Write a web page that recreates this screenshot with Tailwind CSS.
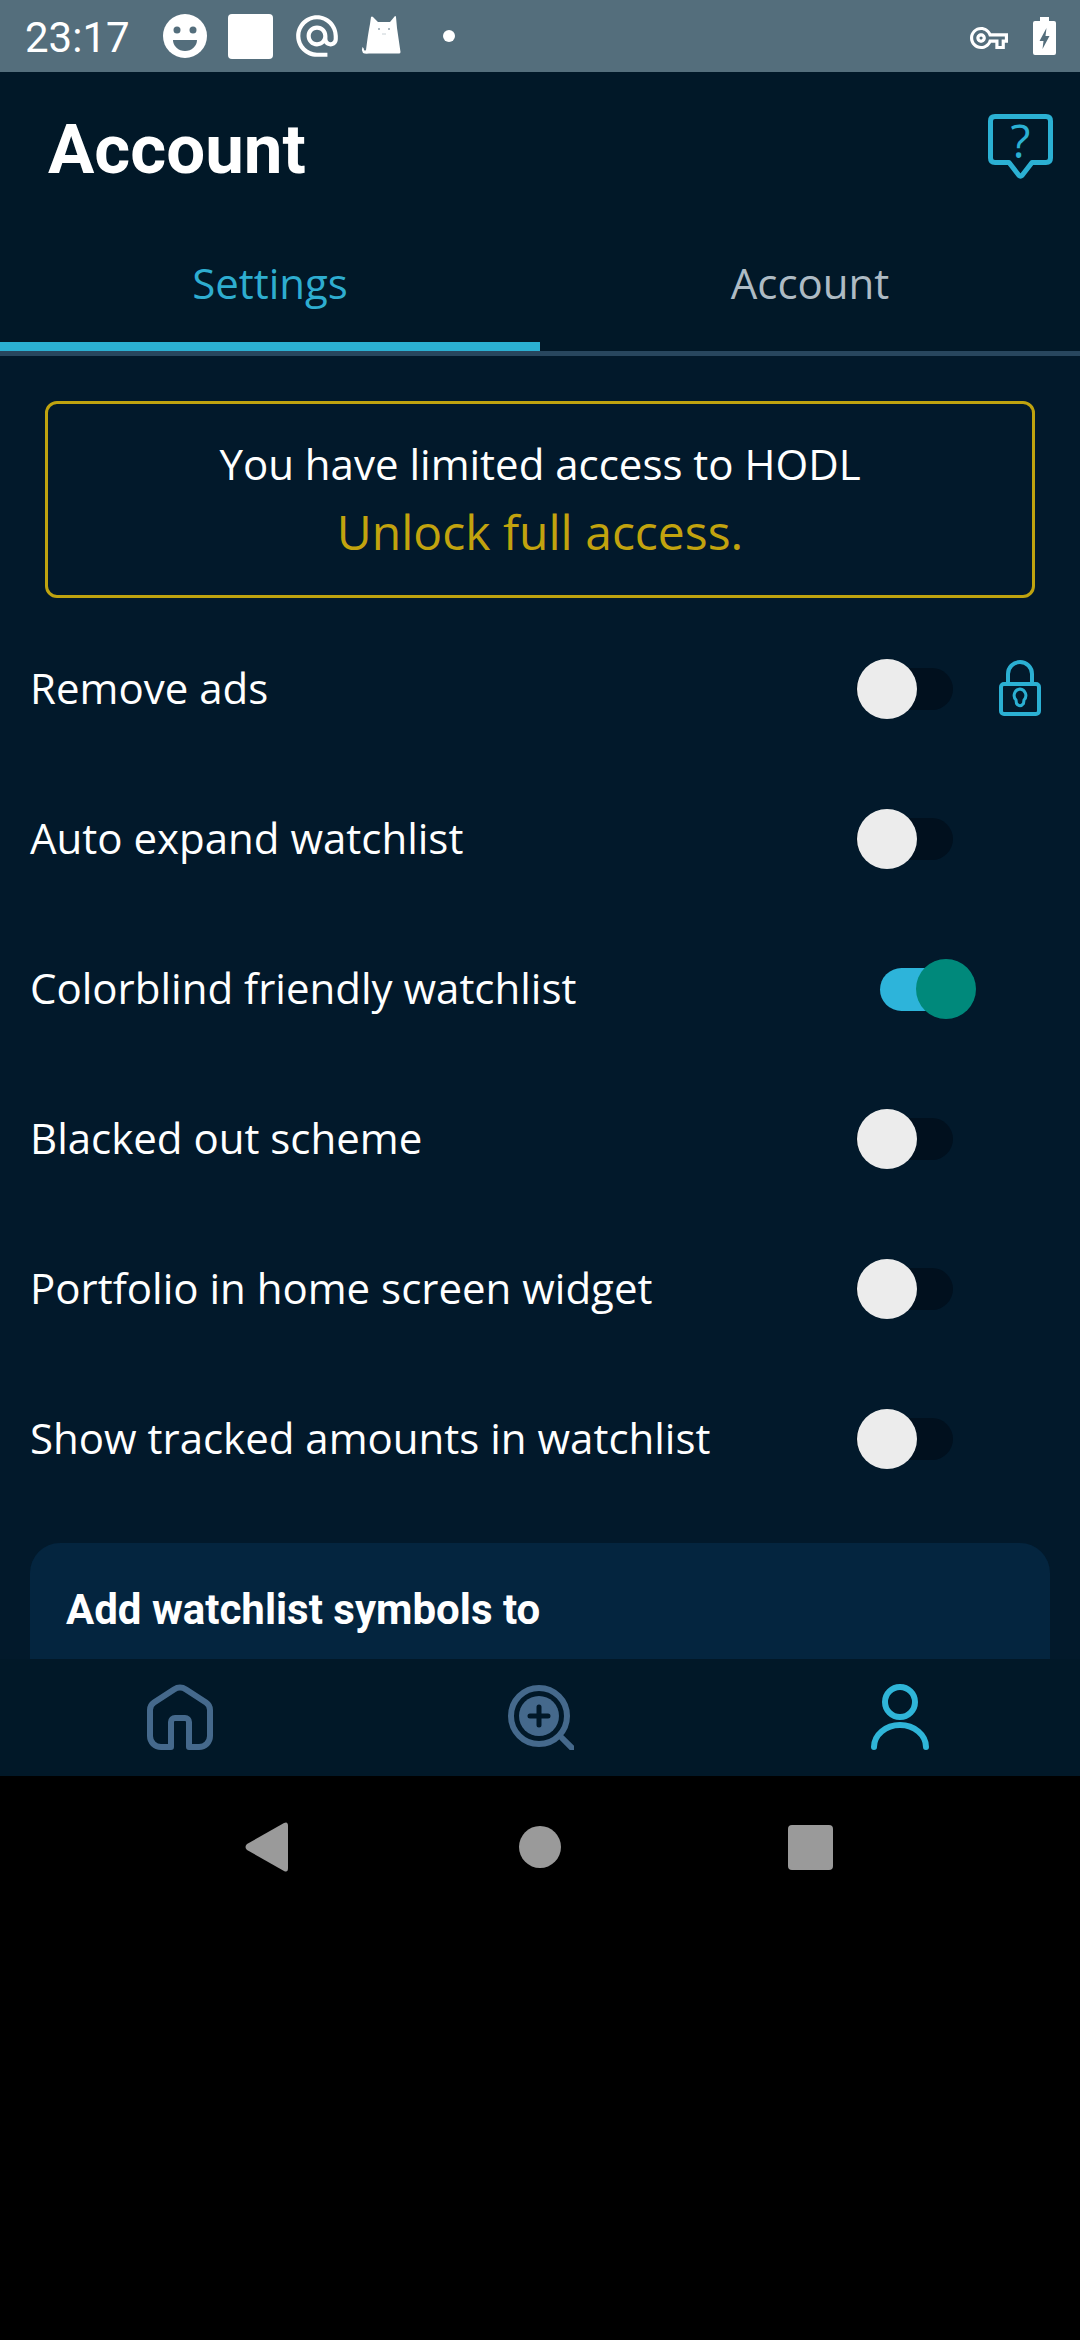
<!DOCTYPE html>
<html lang="en">

<head>
    <meta charset="UTF-8">
    <meta name="viewport" content="width=device-width, initial-scale=1.0">
    <script src="https://cdn.jsdelivr.net/npm/@tailwindcss/browser@4"></script>
    <title>Account</title>
</head>

<body class="bg-black">
    <div class="w-[1080px] h-[2340px] flex flex-col bg-black font-['Open_Sans',sans-serif] text-white overflow-hidden">

        <!-- status bar -->
        <div class="h-[72px] shrink-0 bg-[#546e7c] flex items-center relative">
            <span class="ml-[25px] mt-[4px] w-[104px] font-['Roboto',sans-serif] text-[42px] leading-none">23:17</span>
            <!-- smiley -->
            <svg class="ml-[34px]" width="44" height="44" viewBox="0 0 44 44">
                <circle cx="22" cy="22" r="22" fill="#fff" />
                <circle cx="14" cy="16" r="3.5" fill="#546e7c" />
                <circle cx="30" cy="16" r="3.5" fill="#546e7c" />
                <path d="M10 26 H34 A12 11 0 0 1 10 26 Z" fill="#546e7c" />
            </svg>
            <div class="ml-[21px] w-[45px] h-[45px] rounded-[4px] bg-white"></div>
            <!-- at sign -->
            <svg class="ml-[19px]" width="50" height="50" viewBox="0 0 24 24" fill="#fff">
                <path d="M12 2C6.48 2 2 6.48 2 12s4.48 10 10 10h5v-2h-5c-4.34 0-8-3.66-8-8s3.66-8 8-8 8 3.66 8 8v1.43c0 .79-.71 1.57-1.5 1.57s-1.5-.78-1.5-1.57V12c0-2.76-2.24-5-5-5s-5 2.24-5 5 2.24 5 5 5c1.38 0 2.64-.56 3.54-1.47.65.89 1.77 1.47 2.96 1.47 1.97 0 3.5-1.6 3.5-3.57V12c0-5.52-4.48-10-10-10zm0 13c-1.66 0-3-1.34-3-3s1.34-3 3-3 3 1.34 3 3-1.34 3-3 3z" />
            </svg>
            <!-- cat -->
            <svg class="ml-[18px]" width="44" height="44" viewBox="0 0 44 44" fill="#fff">
                <path d="M11 3 Q12 2 13 3 L18 8 H30 L35 2 Q36 2 36 3 L37 14 L40.500 38 Q40.500 39.500 39 39.500 H9 Q5 40 3 39 Q1 36 2.500 33 Q4 34 4 36 Q5 37 6 36 Q8 20 10 10 Z" />
                <circle cx="19" cy="15" r="1" fill="#8fa1ab" />
                <circle cx="29" cy="15" r="1" fill="#8fa1ab" />
                <path d="M22 20 H26" stroke="#c8d1d6" stroke-width="1" />
            </svg>
            <div class="ml-[39px] w-[12px] h-[12px] rounded-full bg-white"></div>

            <div class="ml-auto flex items-center">
                <!-- vpn key -->
                <svg class="mt-[4px]" width="38" height="38" viewBox="0 0 24 24" fill="#fff">
                    <path d="M22 19h-6v-4h-2.680c-1.140 2.420-3.600 4-6.320 4-3.860 0-7-3.140-7-7s3.140-7 7-7c2.720 0 5.170 1.580 6.320 4H24v6h-2v4zm-4-2h2v-4h2v-2H11.940l-.23-.67C11.010 8.340 9.110 7 7 7c-2.760 0-5 2.240-5 5s2.240 5 5 5c2.110 0 4.010-1.340 4.710-3.330l.23-.67H18v4zM7 15c-1.650 0-3-1.350-3-3s1.350-3 3-3 3 1.350 3 3-1.350 3-3 3zm0-4c-.55 0-1 .45-1 1s.45 1 1 1 1-.45 1-1-.45-1-1-1z" />
                </svg>
                <!-- battery -->
                <svg class="ml-[25px] mr-[24px]" width="23" height="38" viewBox="0 0 23 38">
                    <path d="M7 0 H16 V4 H21 Q23 4 23 6 V36 Q23 38 21 38 H2 Q0 38 0 36 V6 Q0 4 2 4 H7 Z" fill="#fff" />
                    <path d="M13.500 11 L6.500 24 H10.500 L9.500 32 L16.500 19 H12.500 Z" fill="#546e7c" />
                </svg>
            </div>
        </div>

        <!-- header -->
        <div class="h-[150px] shrink-0 bg-[#011828] flex items-center justify-between pl-[48px] pr-[27px]">
            <h1 class="font-['Roboto',sans-serif] font-bold text-[69px] leading-none mt-[5px]">Account</h1>
            <div class="relative w-[65px] h-[66px]">
                <svg class="block" width="65" height="66" viewBox="0 0 65 66">
                    <path d="M7 2.500 H58 Q62.500 2.500 62.500 7 V44 Q62.500 48.500 58 48.500 H44 L34 61.500 Q32.500 63 31 61.500 L21 48.500 H7 Q2.500 48.500 2.500 44 V7 Q2.500 2.500 7 2.500 Z" fill="none" stroke="#2bb0d3" stroke-width="5" stroke-linejoin="round" />
                </svg>
                <span class="absolute inset-x-0 top-0 text-center text-[46px] leading-[52px] font-medium text-[#2bb0d3]">?</span>
            </div>
        </div>

        <!-- tabs -->
        <div class="h-[134px] shrink-0 bg-[#011828] flex">
            <div class="w-1/2 flex flex-col">
                <div class="flex-1 flex items-center justify-center text-[42px] text-[#2eadd0] leading-none pt-[2px]">Settings</div>
                <div class="h-[9px] bg-[#2bb0d3]"></div>
                <div class="h-[5px] bg-[#28465e]"></div>
            </div>
            <div class="w-1/2 flex flex-col">
                <div class="flex-1 flex items-center justify-center text-[42px] text-[#aebbc4] leading-none pt-[2px]">Account</div>
                <div class="h-[9px]"></div>
                <div class="h-[5px] bg-[#28465e]"></div>
            </div>
        </div>

        <!-- settings list -->
        <div class="h-[1303px] shrink-0 bg-[#02192b] overflow-hidden">
            <div class="mt-[45px] mx-[45px] h-[197px] rounded-[12px] border-[3px] border-[#bfa30f] flex flex-col items-center justify-center">
                <p class="text-[42px] leading-[68px] -mt-[3px]">You have limited access to HODL</p>
                <p class="text-[48px] leading-[68px] text-[#c2a30e]">Unlock full access.</p>
            </div>

            <div class="mt-[16px]">
                <div class="h-[150px] flex items-center pl-[30px]">
                    <span class="flex-1 text-[42px] -mt-[3px]">Remove ads</span>
                    <div class="relative w-[120px] h-[60px] flex items-center">
                        <div class="w-[97px] h-[42px] rounded-full bg-[#01101e]"></div>
                        <div class="absolute left-[1px] top-0 w-[60px] h-[60px] rounded-full bg-[#ececec]"></div>
                    </div>
                    <div class="w-[104px] pl-[23px]">
                        <svg class="block -mt-[2px]" width="42" height="56" viewBox="0 0 42 56" fill="none" stroke="#2bb0d3" stroke-width="4">
                            <rect x="2" y="24" width="38" height="30" rx="3" />
                            <path d="M9 24 V14 A12 12 0 0 1 33 14 V24" />
                            <path d="M21 29 A6.500 6.500 0 0 1 25 40 L24.500 43.500 Q21 48 17.500 43.500 L17 40 A6.500 6.500 0 0 1 21 29 Z" stroke-width="3" />
                        </svg>
                    </div>
                </div>

                <div class="h-[150px] flex items-center pl-[30px]">
                    <span class="flex-1 text-[42px] -mt-[3px]">Auto expand watchlist</span>
                    <div class="relative w-[120px] h-[60px] flex items-center">
                        <div class="w-[97px] h-[42px] rounded-full bg-[#01101e]"></div>
                        <div class="absolute left-[1px] top-0 w-[60px] h-[60px] rounded-full bg-[#ececec]"></div>
                    </div>
                    <div class="w-[104px]"></div>
                </div>

                <div class="h-[150px] flex items-center pl-[30px]">
                    <span class="flex-1 text-[42px] -mt-[3px]">Colorblind friendly watchlist</span>
                    <div class="relative w-[120px] h-[60px] flex items-center">
                        <div class="ml-[24px] w-[90px] h-[43px] rounded-full bg-[#2db4da]"></div>
                        <div class="absolute left-[60px] top-0 w-[60px] h-[60px] rounded-full bg-[#00897b]"></div>
                    </div>
                    <div class="w-[104px]"></div>
                </div>

                <div class="h-[150px] flex items-center pl-[30px]">
                    <span class="flex-1 text-[42px] -mt-[3px]">Blacked out scheme</span>
                    <div class="relative w-[120px] h-[60px] flex items-center">
                        <div class="w-[97px] h-[42px] rounded-full bg-[#01101e]"></div>
                        <div class="absolute left-[1px] top-0 w-[60px] h-[60px] rounded-full bg-[#ececec]"></div>
                    </div>
                    <div class="w-[104px]"></div>
                </div>

                <div class="h-[150px] flex items-center pl-[30px]">
                    <span class="flex-1 text-[42px] -mt-[3px]">Portfolio in home screen widget</span>
                    <div class="relative w-[120px] h-[60px] flex items-center">
                        <div class="w-[97px] h-[42px] rounded-full bg-[#01101e]"></div>
                        <div class="absolute left-[1px] top-0 w-[60px] h-[60px] rounded-full bg-[#ececec]"></div>
                    </div>
                    <div class="w-[104px]"></div>
                </div>

                <div class="h-[150px] flex items-center pl-[30px]">
                    <span class="flex-1 text-[42px] -mt-[3px]">Show tracked amounts in watchlist</span>
                    <div class="relative w-[120px] h-[60px] flex items-center">
                        <div class="w-[97px] h-[42px] rounded-full bg-[#01101e]"></div>
                        <div class="absolute left-[1px] top-0 w-[60px] h-[60px] rounded-full bg-[#ececec]"></div>
                    </div>
                    <div class="w-[104px]"></div>
                </div>
            </div>

            <div class="mt-[29px] mx-[30px] h-[200px] rounded-t-[30px] bg-[#04253f] pl-[36px] pt-[43px]">
                <p class="font-['Roboto',sans-serif] font-bold text-[42px] leading-[48px]">Add watchlist symbols to</p>
            </div>
        </div>

        <!-- bottom nav -->
        <div class="h-[117px] shrink-0 bg-[#011828] grid grid-cols-3 pt-[25px]">
            <div class="flex justify-center">
                <svg width="66" height="66" viewBox="0 0 66 66" fill="none" stroke="#45698c" stroke-width="6" stroke-linejoin="round" stroke-linecap="round">
                    <path d="M24 63 H14 A11 11 0 0 1 3 52 V26 A9 9 0 0 1 7 18.500 L27 5.500 A11 11 0 0 1 39 5.500 L59 18.500 A9 9 0 0 1 63 26 V52 A11 11 0 0 1 52 63 H42 V38 A4 4 0 0 0 38 34 H28 A4 4 0 0 0 24 38 V63" />
                </svg>
            </div>
            <div class="flex justify-center">
                <svg width="68" height="66" viewBox="0 0 68 66" fill="none">
                    <circle cx="33" cy="32" r="28" stroke="#45698c" stroke-width="6" />
                    <circle cx="33" cy="32" r="20" fill="#45698c" />
                    <path d="M33 23 V41 M24 32 H42" stroke="#011828" stroke-width="5" stroke-linecap="round" />
                    <path d="M56 54 L66 64" stroke="#45698c" stroke-width="6" stroke-linecap="round" />
                </svg>
            </div>
            <div class="flex justify-center">
                <svg width="60" height="66" viewBox="0 0 60 66" fill="none" stroke="#2fb5d8" stroke-width="6" stroke-linecap="round">
                    <circle cx="30" cy="18" r="15" />
                    <path d="M4 63 A26 22 0 0 1 56 63" />
                </svg>
            </div>
        </div>

        <!-- android nav -->
        <div class="flex-1 bg-black">
            <div class="h-[142px] flex justify-center items-center">
                <div class="w-[270px] flex justify-center">
                    <svg class="mr-[6px]" width="44" height="50" viewBox="0 0 44 50">
                        <path d="M39 1 Q43 -1 43 4 V46 Q43 51 39 49 L2 28 Q-1 25 2 22 Z" fill="#9a9a9a" />
                    </svg>
                </div>
                <div class="w-[270px] flex justify-center">
                    <div class="w-[42px] h-[42px] rounded-full bg-[#9a9a9a]"></div>
                </div>
                <div class="w-[270px] flex justify-center">
                    <div class="w-[45px] h-[45px] rounded-[4px] bg-[#9a9a9a]"></div>
                </div>
            </div>
        </div>
    </div>
</body>

</html>
